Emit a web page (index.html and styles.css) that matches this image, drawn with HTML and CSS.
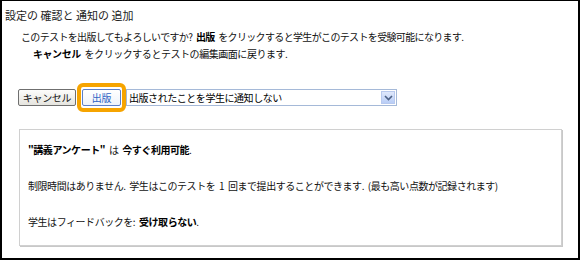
FILE: index.html
```html
<!DOCTYPE html>
<html lang="ja">
<head>
<meta charset="utf-8">
<link rel="stylesheet" href="styles.css">
</head>
<body>
<div class="frame">
  <div class="title">設定の 確認と 通知の 追加</div>
  <p class="line1">このテストを出版してもよろしいですか? <b>出版</b> をクリックすると学生がこのテストを受験可能になります.</p>
  <p class="line2"><b>キャンセル</b> をクリックするとテストの編集画面に戻ります.</p>
  <div class="actions">
    <button class="btn">キャンセル</button>
    <span class="focus"><button class="btn primary">出版</button></span>
    <div class="select">
      <span class="select-text">出版されたことを学生に通知しない</span>
      <span class="arrow"><svg width="9" height="6" viewBox="0 0 9 6"><path d="M1 1 L4.5 4.5 L8 1" fill="none" stroke="#4d6185" stroke-width="1.6"/></svg></span>
    </div>
  </div>
  <div class="panel">
    <p><b>"講義アンケート"</b> は <b>今すぐ利用可能</b>.</p>
    <p>制限時間はありません. 学生はこのテストを 1 回まで提出することができます. (最も高い点数が記録されます)</p>
    <p>学生はフィードバックを: <b>受け取らない</b>.</p>
  </div>
</div>
</body>
</html>
```
FILE: styles.css
```css
html, body {
  margin: 0;
  padding: 0;
  background: #000;
  width: 580px;
  height: 260px;
  overflow: hidden;
}
.frame {
  margin: 1px 2px 0 2px;
  width: 576px;
  height: 257px;
  background: #fff;
  font-family: "Noto Sans CJK JP", "DejaVu Sans", sans-serif;
  font-size: 10px;
  letter-spacing: -0.45px;
  word-spacing: 2px;
  color: #111;
  box-sizing: border-box;
  padding: 6px 0 0 3px;
}
.title {
  font-size: 11px;
  letter-spacing: 0;
  word-spacing: 0;
  line-height: 16px;
  color: #222;
}
p { margin: 0; }
b { font-weight: bold; color: #000; }
.line1 {
  margin-top: 5px;
  padding-left: 16px;
  line-height: 17px;
  letter-spacing: -0.65px;
}
.line2 {
  padding-left: 28px;
  line-height: 17px;
}
.actions {
  display: flex;
  align-items: center;
  margin-top: 21px;
  padding-left: 13px;
  word-spacing: 0;
}
.btn {
  font-family: "Noto Sans CJK JP", sans-serif;
  font-size: 10px;
  letter-spacing: -0.3px;
  height: 17px;
  width: 58px;
  padding: 0;
  border: 1px solid #6f6f6f;
  border-radius: 2px;
  background: linear-gradient(#fcfcfb, #e6e5df);
  color: #111;
  line-height: 15px;
}
.focus {
  margin-left: 1px;
  padding: 2px 1px;
  border: 4px solid #f6a400;
  border-radius: 6px;
  display: flex;
}
.btn.primary {
  width: 39px;
  color: #2f64c4;
  border-color: #5c80c8;
  background: linear-gradient(#ffffff, #eef3fb);
}
.select {
  display: flex;
  align-items: center;
  width: 271px;
  height: 17px;
  box-sizing: border-box;
  border: 1px solid #a5b9d8;
  background: #fff;
}
.select-text {
  flex: 1;
  padding-left: 2px;
  line-height: 15px;
  color: #000;
}
.arrow {
  width: 14px;
  height: 13px;
  margin-right: 1px;
  background: linear-gradient(#dfe8fb, #b9cdf6);
  border: 1px solid #b8c9ee;
  box-sizing: border-box;
  display: flex;
  align-items: center;
  justify-content: center;
}
.panel {
  margin: 17px 0 0 14px;
  width: 543px;
  height: 117px;
  box-sizing: border-box;
  border: 1px solid #d0d0d0;
  box-shadow: 1px 1px 0 #c8c8c8;
  padding: 12px 0 0 8px;
}
.panel p {
  line-height: 16px;
  margin-bottom: 20px;
}
```
